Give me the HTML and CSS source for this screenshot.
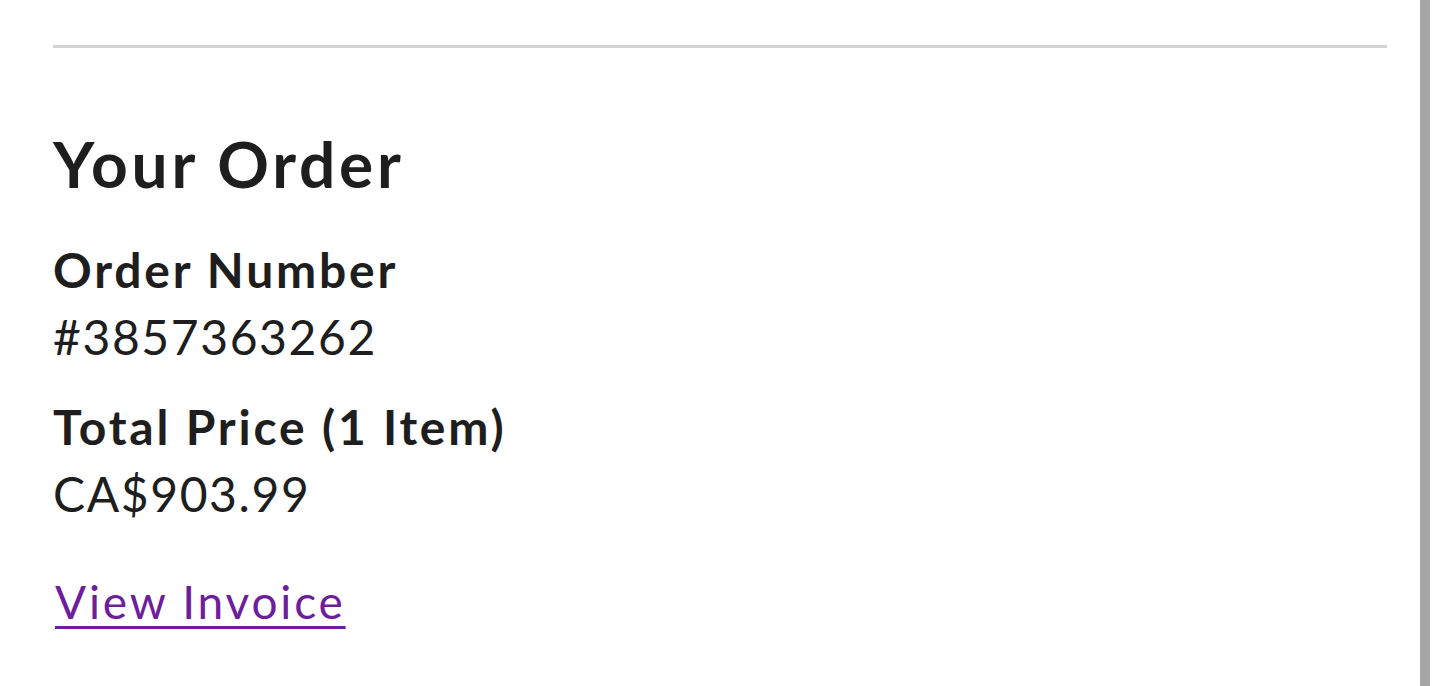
FILE: index.html
```html
<!DOCTYPE html>
<html lang="en">
<head>
	<meta charset="UTF-8">
	<title>Your Order</title>
	<link rel="stylesheet" href="styles.css">
</head>
<body>
	<div id="page">
		<div id="content">
			<hr class="rule">
			<h2 class="title">Your Order</h2>
			<div class="group">
				<p class="label">Order Number</p>
				<p class="value">#3857363262</p>
			</div>
			<div class="group">
				<p class="label">Total Price (1 Item)</p>
				<p class="value">CA$903.99</p>
			</div>
			<a class="invoice" href="#">View Invoice</a>
		</div>
		<div id="scroll-bar"></div>
	</div>
</body>
</html>
```

FILE: styles.css
```css
*{
	margin:0;
	padding:0;
}
body{
	background-color: #fff;
	font-family: Lato, "Noto Sans", sans-serif;
	color: #1e1e1e;
}
#page{
	display: flex;
	height: 686px;
	padding-right: 10px;
	overflow: hidden;
}
#content{
	flex: 1;
	padding: 45px 33px 0 53px;
}
.rule{
	border: none;
	height: 3px;
	background-color: #d3d3d3;
}
.title{
	margin-top: 77px;
	font-size: 64px;
	line-height: 77px;
	font-weight: 700;
	letter-spacing: 3.8px;
}
.group{
	margin-top: 34px;
}
.group + .group{
	margin-top: 23px;
}
.label,.value{
	font-size: 48px;
	line-height: 67px;
}
.label{
	font-weight: 700;
	letter-spacing: 2.8px;
}
.value{
	font-weight: 400;
	letter-spacing: 1.6px;
}
.invoice{
	display: inline-block;
	margin: 41px 0 0 2px;
	font-size: 46px;
	line-height: 67px;
	color: #6e1d9c;
	letter-spacing: 2.8px;
	text-decoration: underline;
	text-decoration-thickness: 3px;
	text-underline-offset: 7px;
}
#scroll-bar{
	width: 10px;
	background-color: #a6a6a6;
}
```
